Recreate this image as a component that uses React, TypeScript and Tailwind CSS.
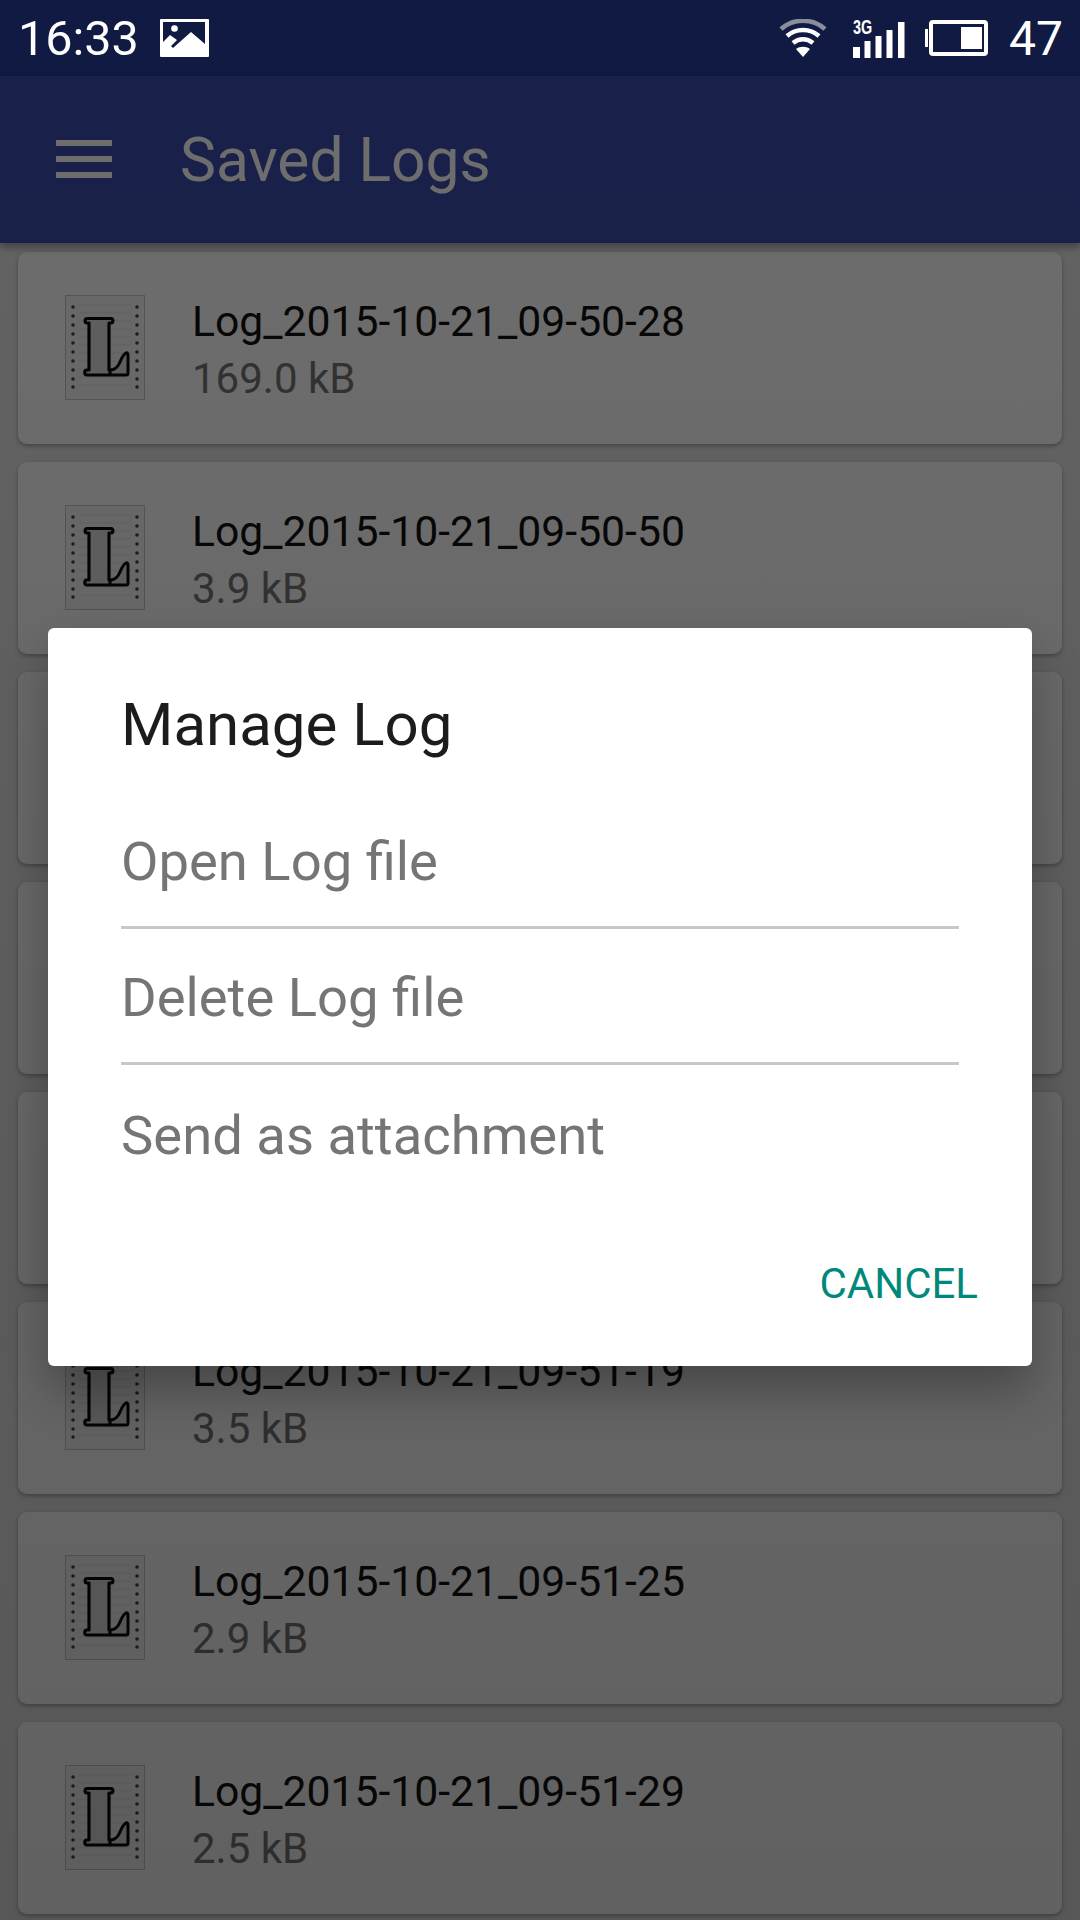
const logs = [
  { name: "Log_2015-10-21_09-50-28", size: "169.0 kB" },
  { name: "Log_2015-10-21_09-50-50", size: "3.9 kB" },
  { name: "Log_2015-10-21_09-50-57", size: "4.2 kB" },
  { name: "Log_2015-10-21_09-51-03", size: "3.1 kB" },
  { name: "Log_2015-10-21_09-51-11", size: "2.7 kB" },
  { name: "Log_2015-10-21_09-51-19", size: "3.5 kB" },
  { name: "Log_2015-10-21_09-51-25", size: "2.9 kB" },
  { name: "Log_2015-10-21_09-51-29", size: "2.5 kB" },
];

const manageItems = ["Open Log file", "Delete Log file", "Send as attachment"];

function ImageIcon() {
  return (
    <svg width="49" height="38" viewBox="0 0 49 38" className="shrink-0">
      <path
        fillRule="evenodd"
        fill="#fff"
        d="M1 0h47a1 1 0 0 1 1 1v36a1 1 0 0 1-1 1H1a1 1 0 0 1-1-1V1a1 1 0 0 1 1-1ZM3 3v20l7-7 7 5-6 6 2 2 18-16 14 12V3Z"
      />
      <circle cx="14.500" cy="9.500" r="3.300" fill="#fff" />
    </svg>
  );
}

function WifiIcon() {
  return (
    <svg width="48" height="38" viewBox="0 0 48 38" fill="none" className="shrink-0">
      <path d="M2 10C14-1 34-1 46 10" stroke="#8a8d9c" strokeWidth="4.5" />
      <path d="M8 17C17 9 31 9 40 17" stroke="#fff" strokeWidth="4.5" />
      <path d="M14 24C20 19 28 19 34 24" stroke="#fff" strokeWidth="4.5" />
      <path d="M17 30c4-3 10-3 14 0L24 38Z" fill="#fff" />
    </svg>
  );
}

function SignalIcon() {
  return (
    <div className="relative w-[54px] h-[39px] shrink-0">
      <span className="absolute left-0 top-[-2px] text-[20px] leading-[20px] font-bold text-white font-['Liberation_Sans'] scale-x-[0.72] origin-left">
        3G
      </span>
      <svg width="54" height="39" viewBox="0 0 54 39" className="absolute inset-0">
        <rect x="0" y="28" width="7" height="11" fill="#fff" />
        <rect x="11.5" y="22" width="6" height="17" fill="#fff" />
        <rect x="22.5" y="17" width="6" height="22" fill="#fff" />
        <rect x="33.5" y="11" width="6" height="28" fill="#fff" />
        <rect x="45" y="3" width="6.5" height="36" fill="#fff" />
      </svg>
    </div>
  );
}

function BatteryIcon() {
  return (
    <svg width="63" height="36" viewBox="0 0 63 36" className="shrink-0">
      <path d="M0 9h3v18H0Z" fill="#fff" />
      <rect x="6" y="2" width="55" height="32" rx="2" fill="none" stroke="#fff" strokeWidth="4" />
      <rect x="36" y="7" width="21" height="22" fill="#fff" />
    </svg>
  );
}

function MenuIcon() {
  return (
    <div className="flex flex-col gap-[10px] w-[56px] -mt-[2px]">
      <div className="h-[6px] bg-white" />
      <div className="h-[6px] bg-white" />
      <div className="h-[6px] bg-white" />
    </div>
  );
}

// notepad picture with the big serif L
function LogIcon() {
  const dots = [12, 21, 30, 39, 48, 57, 66, 75, 84, 92];
  const lines = [10, 18, 26, 34, 42, 50, 58, 66, 74, 82, 90];
  return (
    <svg width="80" height="105" viewBox="0 0 80 105" className="shrink-0 -mt-[1px]">
      <rect x="0.5" y="0.5" width="79" height="104" fill="#f6f6f6" stroke="#c8c8c8" />
      {lines.map((y) => (
        <path key={y} d={`M14 ${y}h52`} stroke="#e2e2e2" strokeWidth="1" />
      ))}
      {dots.map((y) => (
        <g key={y}>
          <circle cx="8" cy={y} r="1.8" fill="#444" />
          <circle cx="72" cy={y} r="1.8" fill="#444" />
        </g>
      ))}
      <path
        d="M45 75c5 0 8-3 10-8s4-8 6-9c1.500-.5 2 1 2 3v17c0 1.500-.5 2-2 2H46c-1.500 0-2-4-1-5Z"
        fill="#dedede"
        stroke="#0a0a0a"
        strokeWidth="3"
        strokeLinejoin="round"
      />
      <path
        d="M22 23.500h24c2.500 0 2.500 4.500 0 4.500h-2v47h1v5H22c-3 0-3-5 0-5h2V28h-2c-2.500 0-2.500-4.500 0-4.500Z"
        fill="#dedede"
        stroke="#0a0a0a"
        strokeWidth="3.200"
        strokeLinejoin="round"
      />
    </svg>
  );
}

export default function App() {
  return (
    <div className="w-[1080px] h-[1920px] flex flex-col overflow-hidden font-['Roboto',sans-serif]">
      {/* Status bar, not dimmed by the dialog */}
      <div className="h-[76px] shrink-0 bg-[#111a42] flex items-center pl-[18px] pr-[17px] text-white">
        <span className="text-[48.5px] leading-none mt-[2px]">16:33</span>
        <div className="ml-[21px]">
          <ImageIcon />
        </div>
        <div className="ml-auto flex items-center">
          <WifiIcon />
          <div className="ml-[26px]">
            <SignalIcon />
          </div>
          <div className="ml-[18px]">
            <BatteryIcon />
          </div>
          <span className="ml-[21px] text-[48px] leading-none mt-[2px]">47</span>
        </div>
      </div>

      <div className="relative flex-1 flex flex-col bg-[#e6e6e6]">
        {/* Toolbar */}
        <div className="h-[167px] shrink-0 bg-[#3a4dac] flex items-center pl-[56px] shadow-[0_4px_8px_rgba(0,0,0,0.35)] z-10">
          <MenuIcon />
          <h1 className="ml-[68px] mt-[4px] text-[60.5px] leading-none font-normal text-white">Saved Logs</h1>
        </div>

        {/* Log list */}
        <div className="flex flex-col gap-[18px] pt-[9px] px-[18px]">
          {logs.map((log) => (
            <div
              key={log.name}
              className="h-[192px] shrink-0 bg-white rounded-[9px] flex items-center pl-[47px] shadow-[0_2px_4px_rgba(0,0,0,0.3)]"
            >
              <LogIcon />
              <div className="ml-[47px] pt-[4px]">
                <div className="text-[42.7px] leading-[57px] text-[#111]">{log.name}</div>
                <div className="text-[42px] leading-[58px] text-[#757575]">{log.size}</div>
              </div>
            </div>
          ))}
        </div>

        {/* Dim layer and dialog */}
        <div className="absolute inset-0 z-20 flex items-center justify-center bg-linear-to-b from-black/57 to-black/62">
          <div className="w-[984px] h-[738px] mb-[2px] bg-white rounded-[6px] flex flex-col shadow-[0_24px_48px_rgba(0,0,0,0.3)]">
            <div className="px-[73px] pt-[57px]">
              <h2 className="text-[60px] leading-[80px] font-normal text-[#1c1c1c]">Manage Log</h2>
              <div className="mt-[28px]">
                {manageItems.map((item, i) => (
                  <div
                    key={item}
                    className={`h-[136px] flex items-center pt-[5px] text-[54.4px] text-[#757575] ${
                      i < manageItems.length - 1 ? "border-b-[3px] border-[#c8c8c8]" : ""
                    }`}
                  >
                    {item}
                  </div>
                ))}
              </div>
            </div>
            <div className="mt-auto flex justify-end pr-[54px] pb-[54px]">
              <button className="text-[42px] leading-[56px] text-[#00897b]">CANCEL</button>
            </div>
          </div>
        </div>
      </div>
    </div>
  );
}
